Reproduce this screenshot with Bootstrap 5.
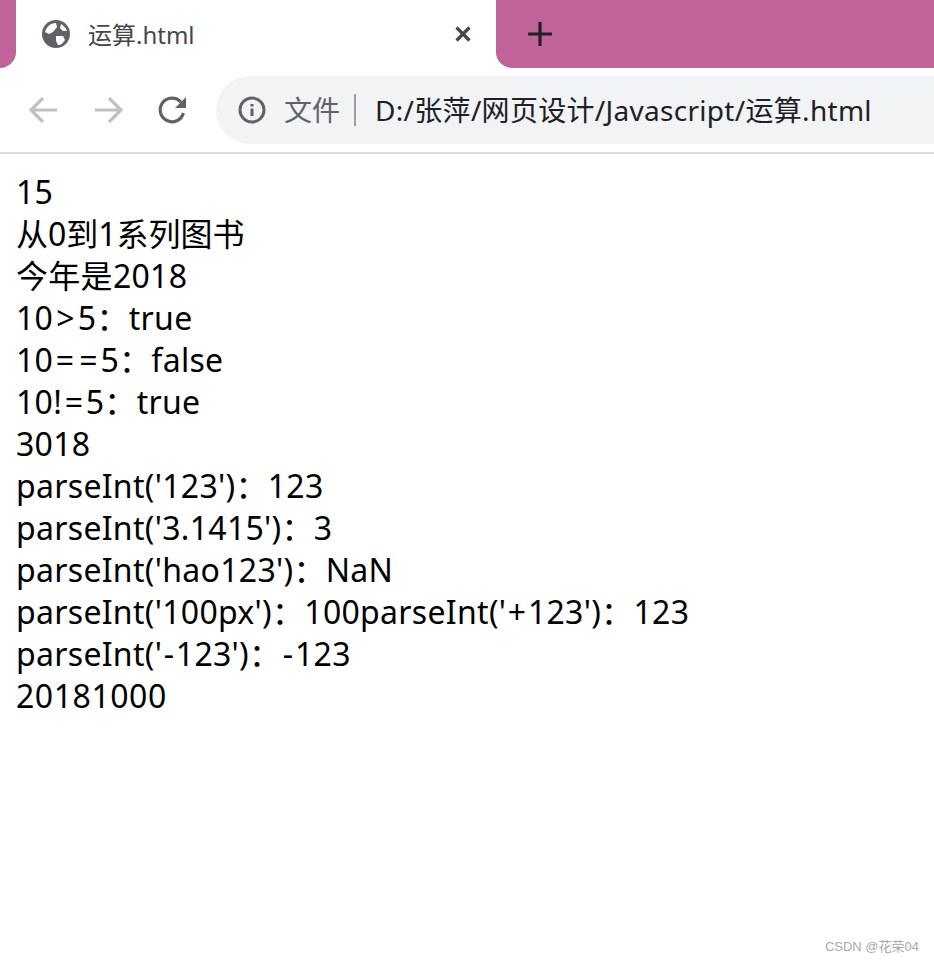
<!DOCTYPE html>
<html lang="zh-CN">
<head>
    <meta charset="UTF-8">
    <meta name="viewport" content="width=device-width, initial-scale=1.0">
    <title>运算.html</title>
    <link rel="stylesheet" href="https://cdn.jsdelivr.net/npm/bootstrap@5.3.0/dist/css/bootstrap.min.css">
    <style>
        body { background: #fff; font-family: "Noto Sans", "Noto Sans CJK SC", sans-serif; overflow: hidden; height: 962px; }
        .tab-strip { height: 68px; }
        .strip-left { width: 16px; background: #bf6399; border-bottom-right-radius: 16px; }
        .strip-right { background: #bf6399; border-bottom-left-radius: 16px; padding-left: 32px; }
        .chrome-tab { width: 480px; background: #fff; border-radius: 16px 16px 0 0; padding: 0 24px 0 25px; color: #45474b; font-size: 24px; }
        .tab-title { margin-left: 17px; margin-top: 1px; }
        .tool-bar { height: 86px; border-bottom: 2px solid #dadce0; padding: 8px 0 8px 24px; }
        .nav-icons { gap: 24px; margin-right: 24px; }
        .omnibox { height: 68px; background: #f1f3f4; border-radius: 34px 0 0 34px; padding-left: 22px; font-size: 28px; color: #202124; }
        .scheme { color: #5f6368; margin-left: 18px; }
        .sep { width: 2px; height: 32px; background: #9aa0a6; margin: 0 19px 0 14px; }
        .url-text { letter-spacing: .3px; }
        .output-text { padding: 17px 0 0 16px; font-size: 32px; line-height: 42px; color: #000; white-space: nowrap; letter-spacing: .3px; }
        .cjk-line { letter-spacing: 0; }
        .digit-line { letter-spacing: .55px; }
        .wide-sym { padding: 0 3px; }
        .eq-sym { padding: 0 2.5px; }
        .dash-sym { padding: 0 1.5px; }
        .watermark { position: absolute; right: 15px; bottom: 6px; font-family: "Liberation Sans", "Noto Sans CJK SC", sans-serif; font-size: 13px; color: #a8a8a8; }
    </style>
</head>
<body>
    <div class="tab-strip d-flex">
        <div class="strip-left"></div>
        <div class="chrome-tab d-flex align-items-center">
            <svg width="30" height="30" viewBox="0 0 30 30"><circle cx="15" cy="15" r="14" fill="#5f6368"/><path d="M4 13 C6 7 10 4 15 4 L16 8 L12 13 L8 15 Z M15 17 L22 17 L24 21 C22 24 20 26 17 26 L15 22 Z M20 5 C23 7 25 9 26 12 L22 12 L19 9 Z" fill="#fff"/></svg>
            <span class="tab-title flex-grow-1">运算.html</span>
            <svg width="18" height="18" viewBox="0 0 18 18"><path d="M2.5 2.5 L15.5 15.5 M15.5 2.5 L2.5 15.5" stroke="#45474b" stroke-width="3.2" fill="none"/></svg>
        </div>
        <div class="strip-right flex-grow-1 d-flex align-items-center">
            <svg width="24" height="24" viewBox="0 0 24 24"><path d="M12 1 V23 M1 12 H23" stroke="#202124" stroke-width="3.2" stroke-linecap="round" fill="none"/></svg>
        </div>
    </div>
    <div class="tool-bar d-flex align-items-center">
        <div class="nav-icons d-flex align-items-center">
            <svg width="40" height="40" viewBox="0 0 40 40"><path d="M33 20 H8 M19 8 L7 20 L19 32" stroke="#bdc1c6" stroke-width="3.2" fill="none"/></svg>
            <svg width="40" height="40" viewBox="0 0 40 40"><path d="M7 20 H32 M21 8 L33 20 L21 32" stroke="#bdc1c6" stroke-width="3.2" fill="none"/></svg>
            <svg width="40" height="40" viewBox="0 0 40 40"><path d="M28.8 12.1 A11.8 11.8 0 1 0 31.4 23" stroke="#5f6368" stroke-width="3.2" fill="none"/><path d="M34 7 V18 H23 Z" fill="#5f6368"/></svg>
        </div>
        <div class="omnibox flex-grow-1 d-flex align-items-center">
            <svg width="28" height="28" viewBox="0 0 28 28"><circle cx="14" cy="14" r="12" stroke="#5f6368" stroke-width="3" fill="none"/><path d="M14 12.5 V20 M14 8 V10.5" stroke="#5f6368" stroke-width="3" fill="none"/></svg>
            <span class="scheme">文件</span>
            <span class="sep"></span>
            <span class="url-text">D:/张萍/网页设计/Javascript/运算.html</span>
        </div>
    </div>
    <div class="output-text">
        15<br>
        <span class="cjk-line">从0到1系列图书</span><br>
        今年是2018<br>
        10<span class="wide-sym">&gt;</span>5：true<br>
        10<span class="eq-sym">=</span><span class="eq-sym">=</span>5：false<br>
        10!<span class="eq-sym">=</span>5：true<br>
        3018<br>
        parseInt('123')：123<br>
        parseInt('3.1415')：3<br>
        parseInt('hao123')：NaN<br>
        parseInt('100px')：100parseInt('<span class="dash-sym">+</span>123')：123<br>
        parseInt('<span class="dash-sym">-</span>123')：<span class="dash-sym">-</span>123<br>
        <span class="digit-line">20181000</span>
    </div>
    <div class="watermark">CSDN @花荣04</div>
</body>
</html>
